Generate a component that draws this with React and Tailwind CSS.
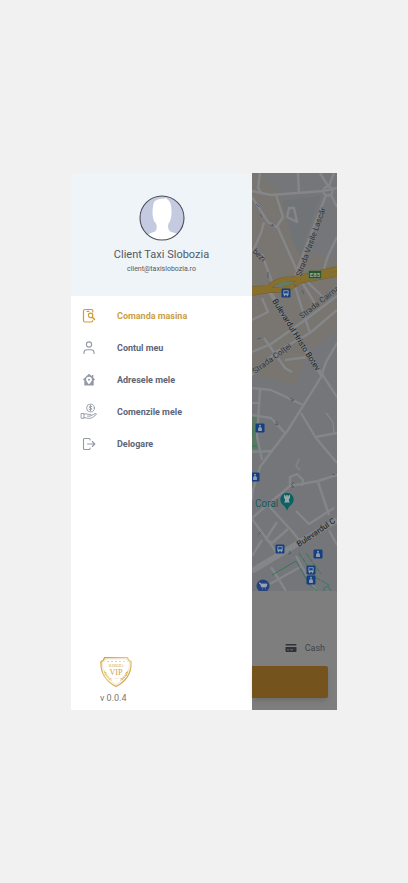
import React from "react";

const roads = [
  "M252 191L271 195L323 191L337 188",
  "M260 173L258 188L262 194",
  "M298 173L299 193",
  "M252 197L268 222L278 228L298 273L322 296",
  "M276 195L283 217L276 228",
  "M289 208L294 208L297 222L287 217Z",
  "M326 195L298 268L294 280",
  "M264 222L261 233L252 253",
  "M262 254L273 285",
  "M331 195L337 207",
  "M320 173L328 186",
  "M334 173L329 186",
  "M337 237L328 256L323 272",
  "M293 280L303 312L310 333",
  "M303 284L316 305",
  "M252 320L268 312L262 298",
  "M252 352L271 344L305 320L337 296",
  "M252 375L276 352L292 343L310 333L337 310",
  "M264 338L285 368L292 372",
  "M285 360L308 357",
  "M337 343L326 362L321 377L318 382L288 430L271 452L260 467L253 490L252 500",
  "M322 374L337 397",
  "M252 388L271 390L303 405",
  "M260 390L257 437L262 460",
  "M252 415L271 418L285 433",
  "M252 403L260 403",
  "M301 413L316 438L337 463",
  "M316 437L337 433",
  "M252 452L273 451",
  "M252 518L272 501L290 486L318 481L337 475",
  "M318 482L329 515",
  "M290 486L290 477L297 474L303 480L302 486",
  "M268 505L291 530L303 545",
  "M252 519L272 546L279 558",
  "M277 522L266 539L272 543L288 529",
  "M296 511L309 524L334 508",
  "M252 556L262 540",
  "M296 556L316 591",
  "M271 567L286 591",
  "M270 584L302 566",
  "M329 530L337 545",
];

function Person({ x, y }) {
  return (
    <g transform={`translate(${x} ${y})`}>
      <rect x="-4.5" y="-4.5" width="9" height="9" rx="1.3" fill="#153f80" />
      <circle cy="-2.2" r="1" fill="#8e9db3" />
      <path d="M-1.9 3V.6Q-1.9-.9 0-.9T1.9.6V3Z" fill="#8e9db3" />
    </g>
  );
}

function Bus({ x, y }) {
  return (
    <g transform={`translate(${x} ${y})`}>
      <rect x="-4.5" y="-4.5" width="9" height="9" rx="1.3" fill="#153f80" />
      <path d="M-2.6-2.8H2.6V2.2H2V3.2H1V2.2H-1V3.2H-2V2.2H-2.6Z" fill="#8e9db3" />
      <path d="M-1.7-1.8H1.7V.3H-1.7Z" fill="#153f80" />
    </g>
  );
}

function CityMap() {
  return (
    <svg
      viewBox="252 173 85 418"
      preserveAspectRatio="xMidYMid slice"
      className="block h-[418px] w-full bg-[#747679]"
      role="img"
      aria-label="Harta Slobozia"
      fontFamily="Roboto, sans-serif"
    >
      <path
        d="M252 173H262L285 200L290 225L300 250L337 259V330L310 350L295 385L252 375Z"
        fill="#797671"
      />
      <path d="M282 201L320 196L300 256L292 240Z" fill="#717477" />
      <path d="M252 417H257V437L259 449H252Z" fill="#5a7862" />
      <g fill="none" stroke="#848689" strokeWidth="2.4" strokeLinejoin="round">
        {roads.map((d) => (
          <path key={d} d={d} />
        ))}
        <path d="M326 413L333 422L334 433M299 459L296 466L300 470" strokeWidth="1.4" />
        <path d="M266 285L285 318L323 377" strokeWidth="4" />
        <path d="M252 571L297 544L337 520" strokeWidth="6" />
        <circle cx="328" cy="191" r="4.5" />
      </g>
      <path
        d="M252 289L268 288Q276 279 293 279L337 269M252 293L270 290Q290 291 299 281L337 274"
        fill="none"
        stroke="#6f6037"
        strokeWidth="5.6"
      />
      <path
        d="M252 289L268 288Q276 279 293 279L337 269M252 293L270 290Q290 291 299 281L337 274"
        fill="none"
        stroke="#88702c"
        strokeWidth="4.4"
      />
      <path d="M275 286Q281 280 293 282Q287 288 275 286Z" fill="#647b66" />
      <g fill="none" stroke="#2f7652" strokeWidth=".9">
        <path d="M252 437V428M252 446H257" />
        <path d="M272 575L296 561L309 584L317 591" />
        <path d="M299 553L315 577L329 585M306 553L321 574" strokeDasharray="5 1" />
        <path d="M324 591V588L328 586L331 591" />
      </g>
      <g fill="none" stroke="#50586b" strokeWidth=".9">
        <path d="M256 204L259 207M260 214L262 217M270 225L274 226L272 224M268 272L268 278M294 284L296 287M302 290L304 294M290 398L294 400L291 401M275 424L278 425L276 421M291 484L294 487L291 487M332 474L335 475M292 484L294 482M258 535L261 532M288 554L291 553L289 551M257 339L261 338" />
      </g>
      <g fill="#2c3035" fontSize="8" stroke="#818386" strokeWidth="1" paintOrder="stroke">
        <text transform="translate(301 277) rotate(-70)">Strada Vasile Lascăr</text>
        <text transform="translate(252 252) rotate(44)">bezi</text>
        <text transform="translate(302 319) rotate(-38)">Strada Cairna</text>
        <text transform="translate(255 374) rotate(-36)">Strada Colței</text>
        <text transform="translate(272 301) rotate(58)" fill="#191c20">Bulevardul Hristo Botev</text>
        <text transform="translate(299 547) rotate(-34)" fill="#191c20">Bulevardul C</text>
      </g>
      <rect x="308.500" y="270.500" width="13" height="8" rx="1" fill="#24572b" stroke="#718071" strokeWidth=".5" />
      <text x="315" y="277" fontSize="6" fontWeight="700" textAnchor="middle" fill="#a4aaa2">E85</text>
      <text x="255" y="507" fontSize="10" fill="#125659" stroke="#7d8082" strokeWidth=".8" paintOrder="stroke">Coral</text>
      <path d="M287 511Q286 507 282 504A6.700 6.700 0 1 1 292 504Q288 507 287 511Z" fill="#0c6163" />
      <path d="M284 495H285.300V496.200H286.300V495H287.700V496.200H288.700V495H290V498L289 499V501L290 502.500H284L285 501V499L284 498Z" fill="#9aa8a8" />
      <Bus x={286} y={293} />
      <Person x={260} y={428} />
      <Person x={255} y={477} />
      <Bus x={280} y={549} />
      <Person x={318} y={554} />
      <Bus x={311} y={570} />
      <Person x={311} y={580} />
      <circle cx="263" cy="586" r="6.500" fill="#24427e" />
      <path d="M259 583H260.300L261.500 587H266L267 584H260.700ZM262 589H262.800M265 589H265.800" fill="#99a5b7" stroke="#99a5b7" strokeWidth=".8" />
    </svg>
  );
}

function OrderIcon() {
  return (
    <svg viewBox="0 0 16 16" className="size-4" fill="none" stroke="currentColor" strokeWidth="1.2" strokeLinecap="round" strokeLinejoin="round" aria-hidden="true">
      <path d="M11.800 4V3Q11.800 1.500 10.300 1.500H4Q2.500 1.500 2.500 3V12.500Q2.500 14 4 14H10.300Q11.800 14 11.800 12.500M6 3.300H8" />
      <circle cx="9.600" cy="7.400" r="2.200" />
      <path d="M11.300 9.200L13.500 11.400" strokeWidth="1.500" />
    </svg>
  );
}

function UserIcon() {
  return (
    <svg viewBox="0 0 16 16" className="size-4" fill="none" stroke="currentColor" strokeWidth="1.1" strokeLinecap="round" aria-hidden="true">
      <circle cx="8" cy="4.500" r="2.600" />
      <path d="M3 13.500V12.500Q3 9.700 6 9.700H10Q13 9.700 13 12.500V13.500" />
    </svg>
  );
}

function HomeIcon() {
  return (
    <svg viewBox="0 0 16 16" className="size-4" aria-hidden="true">
      <path fillRule="evenodd" d="M8 1.800L10.700 4.300V3H12.300V5.800L14 7.500L13 8.600L12.700 8.300V13.500H3.300V8.300L3 8.600L2 7.500ZM8 4.800A2.900 2.900 0 0 0 5.100 7.700C5.100 9.500 6.700 10.700 8 12.200C9.300 10.700 10.900 9.500 10.900 7.700A2.900 2.900 0 0 0 8 4.800Z" fill="currentColor" />
      <circle cx="8" cy="7.700" r="1" fill="#72a9bd" />
    </svg>
  );
}

function MoneyIcon() {
  return (
    <svg viewBox="0 0 16 16" className="size-4 overflow-visible" fill="none" stroke="currentColor" strokeWidth=".9" strokeLinecap="round" strokeLinejoin="round" aria-hidden="true">
      <circle cx="9.500" cy="4" r="3.900" />
      <path d="M11 2.700Q9.500 1.500 8.400 2.600C7.500 4.300 11.300 3.700 10.700 5.200Q9.700 6.300 8.100 5.300M9.500 1.300V6.700" />
      <path d="M.5 9.500H3V14.300H.5ZM3 10.300Q5 9 7 10.300H9Q10.300 10.300 10.200 11.300T9 12.100H6.500M10.200 11.500L14 9.700Q15.600 9.300 15.500 10.400L11 13.800Q9.500 14.500 7 14.300L3 13.500" />
    </svg>
  );
}

function ExitIcon() {
  return (
    <svg viewBox="0 0 16 16" className="size-4" fill="none" stroke="currentColor" strokeWidth="1.1" strokeLinecap="round" strokeLinejoin="round" aria-hidden="true">
      <path d="M9 4V3.500Q9 2.500 8 2.500H3.500Q2.500 2.500 2.500 3.500V12.500Q2.500 13.500 3.500 13.500H8Q9 13.500 9 12.500V12M6.500 8H13.700M11.300 5.500L13.800 8L11.300 10.500" />
    </svg>
  );
}

const items = [
  { label: "Comanda masina", Icon: OrderIcon, active: true },
  { label: "Contul meu", Icon: UserIcon },
  { label: "Adresele mele", Icon: HomeIcon },
  { label: "Comenzile mele", Icon: MoneyIcon },
  { label: "Delogare", Icon: ExitIcon },
];

function Avatar() {
  return (
    <svg viewBox="0 0 46 46" className="size-[46px]" role="img" aria-label="Client">
      <defs>
        <clipPath id="avatar">
          <circle cx="23" cy="23" r="22" />
        </clipPath>
      </defs>
      <circle cx="23" cy="23" r="22" fill="#c4cbe0" />
      <path clipPath="url(#avatar)" fill="#fff" d="M0 46L3 42Q11 38 16 36.500Q19 34 17 28.500Q14 26 13.500 19Q13.500 8 16 6Q19 3.500 25 3.500L28 3Q27.500 4 28.500 4.500Q33 7 32.500 19Q32 26 29.500 28.500Q28 34 31 36.500Q38 38 43 42L46 46Z" />
      <circle cx="23" cy="23" r="22" fill="none" stroke="#4b4d58" strokeWidth="1.1" />
    </svg>
  );
}

function Logo() {
  return (
    <svg viewBox="0 0 32 32" className="size-8" fill="none" stroke="url(#gold)" role="img" aria-label="Slobozia VIP Taxi">
      <defs>
        <linearGradient id="gold" x1="0" y1="0" x2="32" y2="32" gradientUnits="userSpaceOnUse">
          <stop offset="0" stopColor="#c99532" />
          <stop offset=".45" stopColor="#e6c877" />
          <stop offset="1" stopColor="#c08a2b" />
        </linearGradient>
      </defs>
      <path d="M4.500 1.700H27.500Q28 4.700 31 5.500Q32 22 16 30.500Q0 22 1 5.500Q4 4.700 4.500 1.700Z" strokeWidth="1.200" />
      <path d="M5.700 3H26.300Q27 5.700 29.600 6.500Q30 21 16 28.900Q2 21 2.400 6.500Q5 5.700 5.700 3Z" strokeWidth=".3" />
      <path d="M7.500 5.500H8.700M11.400 5.500H12.600M15.400 5.500H16.600M19.400 5.500H20.600M23.300 5.500H24.500" strokeWidth="1.200" />
      <path d="M4.300 14.500Q5 21.500 12 24.500M27.700 14.500Q27 21.500 20 24.500" strokeWidth=".5" />
      <path d="M4.500 16L6.500 17.500M5 18.500L7.500 19.500M7 21.300L9.500 21M9 23.200L11.500 22.500M27.500 16L25.500 17.500M27 18.500L24.500 19.500M25 21.300L22.500 21M23 23.200L20.500 22.500" strokeWidth="1.100" />
      <g fill="#c7a04f" stroke="none" textAnchor="middle" fontFamily="Liberation Serif, serif">
        <text x="16" y="11" fontSize="3">SLOBOZIA</text>
        <text x="16" y="18.500" fontSize="8">VIP</text>
        <text x="16" y="23" fontSize="2">TAXI</text>
      </g>
    </svg>
  );
}

export default function App() {
  return (
    <main className="flex min-h-screen items-center justify-center bg-[#f1f1f1] font-[Roboto,sans-serif]">
      <div className="flex min-h-[537px] w-full max-w-[266px] overflow-hidden bg-[#7e7e7e]">
        <aside className="flex w-[181px] shrink-0 flex-col bg-white">
          <header className="flex h-[123px] flex-col items-center bg-[#eef4f7] pt-[22px] text-[#535963]">
            <Avatar />
            <h1 className="mt-1.5 text-[11px] leading-4">Client Taxi Slobozia</h1>
            <p className="mt-0.5 text-[7px] leading-2">client@taxislobozia.ro</p>
          </header>
          <nav className="flex flex-col pt-1">
            {items.map(({ label, Icon, active }) => (
              <a
                key={label}
                href="#"
                className={`flex h-8 items-center gap-5 pl-2.5 ${active ? "text-[#cf9b3c]" : "text-[#9399a5]"}`}
              >
                <Icon />
                <span className={`text-[9px] leading-3 font-bold ${active ? "text-[#cb9f46]" : "text-[#5d6576]"}`}>
                  {label}
                </span>
              </a>
            ))}
          </nav>
          <footer className="mt-auto flex flex-col pb-1.5 pl-[29px]">
            <Logo />
            <span className="mt-1 text-[9px] leading-3 text-[#777]">v 0.0.4</span>
          </footer>
        </aside>
        <section className="flex min-w-0 flex-1 flex-col">
          <CityMap />
          <div className="mt-auto mr-3 mb-3 flex items-center justify-end gap-2 text-[9px] leading-3 text-[#41444b]">
            <svg viewBox="0 0 12 10" className="h-2.5 w-3" aria-hidden="true">
              <path fill="#303239" fillRule="evenodd" d="M1 1H11Q11.500 1 11.500 2.500H.5Q.5 1 1 1ZM.5 4H11.500V8Q11.500 9 10.500 9H1.500Q.5 9 .5 8ZM2 6.500V7.300H4V6.500ZM5 6.500V7.300H8V6.500Z" />
            </svg>
            Cash
          </div>
          <button type="button" aria-label="Comanda" className="mr-[9px] mb-3 h-8 rounded-r-xs bg-[#74541c] shadow-md" />
        </section>
      </div>
    </main>
  );
}
